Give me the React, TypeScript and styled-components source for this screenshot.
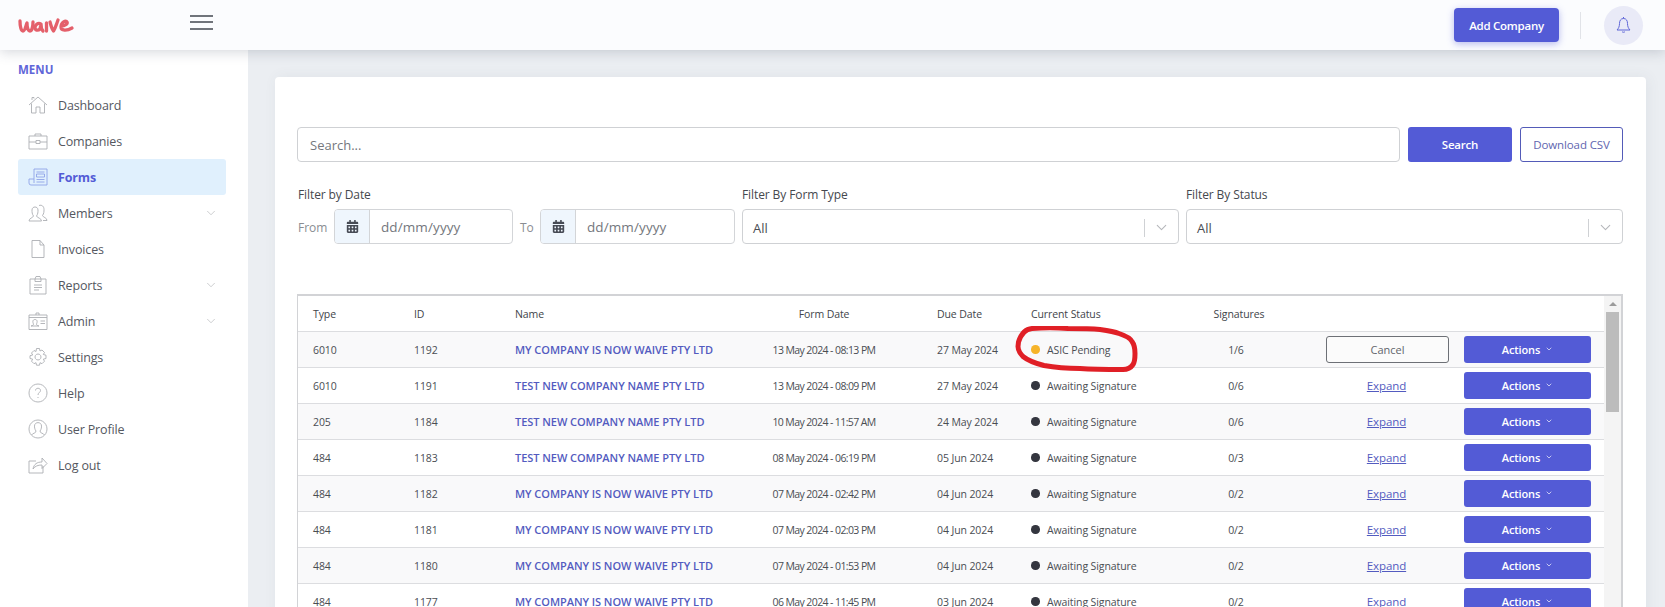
import { FC } from 'react';
import styled, { createGlobalStyle } from 'styled-components';
import { FaCalendarAlt } from 'react-icons/fa';
import { FiChevronDown } from 'react-icons/fi';

const GlobalStyle = createGlobalStyle`
  html, body {
    margin: 0;
    padding: 0;
    height: 607px;
    overflow: hidden;
    background: #ebeef2;
    font-family: 'Open Sans', 'Noto Sans', sans-serif;
    color: #3f4147;
  }
  * {
    box-sizing: border-box;
  }
`;

const Page = styled.div`
  width: 1665px;
  height: 607px;
  display: flex;
  flex-direction: column;
  overflow: hidden;
`;

const Header = styled.header`
  position: relative;
  z-index: 2;
  flex: 0 0 50px;
  display: flex;
  align-items: center;
  padding: 0 22px 0 18px;
  background: #fbfcfe;
  box-shadow: 0 2px 12px rgba(60, 70, 90, 0.22);
`;

const Burger = styled.div`
  width: 23px;
  margin-left: 115px;
  margin-top: -6px;
  display: flex;
  flex-direction: column;
  gap: 4.5px;
  span {
    height: 2px;
    background: #70747b;
  }
`;

const HeaderRight = styled.div`
  margin-left: auto;
  display: flex;
  align-items: center;
`;

const AddCompany = styled.button`
  width: 105px;
  height: 34px;
  border: 0;
  border-radius: 4px;
  background: #535bd6;
  color: #fff;
  font: 600 11.5px 'Open Sans', sans-serif;
  letter-spacing: -0.25px;
  box-shadow: 0 2px 7px rgba(83, 91, 214, 0.4);
`;

const HeaderDivider = styled.div`
  width: 1px;
  height: 27px;
  margin: 0 23px 0 21px;
  background: #e1e3e8;
`;

const Bell = styled.div`
  width: 39px;
  height: 39px;
  border-radius: 50%;
  background: #e9eaf7;
  display: flex;
  align-items: center;
  justify-content: center;
`;

const Body = styled.div`
  flex: 1;
  display: flex;
  min-height: 0;
`;

const Sidebar = styled.aside`
  flex: 0 0 248px;
  padding: 13px 22px 0 18px;
  background: #fff;
`;

const MenuTitle = styled.div`
  height: 24px;
  color: #5f66d8;
  font-size: 11.5px;
  line-height: 14px;
  font-weight: 700;
`;

const NavItem = styled.div<{ $active?: boolean }>`
  height: 36px;
  display: flex;
  align-items: center;
  padding: 0 8px 0 10px;
  border-radius: 3px;
  background: ${(p) => (p.$active ? '#e0f0fd' : 'transparent')};
  color: ${(p) => (p.$active ? '#535bd6' : '#55585f')};
  font-size: 12.5px;
  letter-spacing: -0.15px;
  font-weight: ${(p) => (p.$active ? 700 : 400)};
`;

const NavIcon = styled.svg`
  width: 20px;
  height: 20px;
  margin-right: 10px;
  flex: none;
  fill: none;
  stroke-width: 0.9;
`;

const NavLabel = styled.span`
  flex: 1;
`;

const Content = styled.main`
  flex: 1;
  min-width: 0;
  padding: 27px 0 0 27px;
`;

const Card = styled.section`
  width: 1371px;
  height: 560px;
  padding: 50px 23px 0 22px;
  border-radius: 4px 4px 0 0;
  background: #fff;
  box-shadow: 2px 0 14px rgba(70, 80, 100, 0.07);
`;

const SearchRow = styled.div`
  display: flex;
  height: 35px;
`;

const SearchInput = styled.div`
  flex: 1;
  display: flex;
  align-items: center;
  padding-left: 12px;
  border: 1px solid #cfd1d4;
  border-radius: 4px;
  color: #74777d;
  font-size: 13px;
`;

const SearchButton = styled.button`
  width: 104px;
  margin-left: 8px;
  border: 0;
  border-radius: 3px;
  background: #535bd6;
  color: #fff;
  font: 600 11.5px 'Open Sans', sans-serif;
  letter-spacing: -0.2px;
`;

const CsvButton = styled.button`
  width: 103px;
  margin-left: 8px;
  border: 1px solid #535bb8;
  border-radius: 3px;
  background: #fff;
  color: #5f66b0;
  font: 400 11.5px 'Open Sans', sans-serif;
  letter-spacing: -0.1px;
`;

const Filters = styled.div`
  display: flex;
  gap: 7px;
  margin: 23px 0 0 1px;
`;

const FilterGroup = styled.div<{ $width: number }>`
  width: ${(p) => p.$width}px;
`;

const FilterLabel = styled.div`
  height: 24px;
  color: #45484e;
  font-size: 12px;
  letter-spacing: -0.1px;
  line-height: 19px;
`;

const DateRow = styled.div`
  display: flex;
  align-items: center;
  height: 35px;
`;

const DateText = styled.span<{ $width: number; $pad?: number }>`
  width: ${(p) => p.$width}px;
  padding: 1px 0 0 ${(p) => p.$pad ?? 0}px;
  color: #8a8d92;
  font-size: 12px;
`;

const DateBox = styled.div<{ $width: number }>`
  width: ${(p) => p.$width}px;
  height: 35px;
  display: flex;
  border: 1px solid #d3d5d8;
  border-radius: 4px;
  overflow: hidden;
`;

const DateIcon = styled.div`
  width: 35px;
  display: flex;
  align-items: center;
  justify-content: center;
  background: #eff6fd;
  border-right: 1px solid #d3d5d8;
  color: #474b55;
  font-size: 13px;
`;

const DateValue = styled.div`
  flex: 1;
  padding-left: 11px;
  color: #74777d;
  font-size: 13.5px;
  letter-spacing: 0.1px;
  line-height: 35px;
`;

const SelectBox = styled.div`
  height: 35px;
  display: flex;
  align-items: center;
  padding: 2px 0 0 10px;
  border: 1px solid #cfd1d4;
  border-radius: 4px;
  color: #4a4d53;
  font-size: 13px;
`;

const SelectValue = styled.span`
  flex: 1;
`;

const SelectCaret = styled.div`
  width: 34px;
  height: 18px;
  display: flex;
  align-items: center;
  justify-content: center;
  border-left: 1px solid #cfd1d4;
  color: #b5b7bb;
  font-size: 17px;
`;

const TableWrap = styled.div`
  position: relative;
  margin-top: 50px;
  height: 400px;
  border-style: solid;
  border-color: #d2d3d6;
  border-width: 2px 2px 0 1px;
  overflow: hidden;
`;

const Table = styled.div`
  width: 1308px;
`;

const Row = styled.div<{ $head?: boolean; $shade?: boolean }>`
  display: grid;
  grid-template-columns: 101px 101px 209px 200px 13px 94px 149px 112px 172px 127px;
  align-items: center;
  height: 36px;
  padding-left: 15px;
  border-bottom: 1px solid #dcdde0;
  background: ${(p) => (p.$shade ? '#f9f9fa' : '#fff')};
  color: ${(p) => (p.$head ? '#41444a' : '#4a4d53')};
  font-size: 10.5px;
  letter-spacing: -0.1px;
`;

const Cell = styled.div<{ $center?: boolean }>`
  white-space: nowrap;
  text-align: ${(p) => (p.$center ? 'center' : 'left')};
`;

const FormDate = styled(Cell)`
  letter-spacing: -0.6px;
`;

const SignaturesHead = styled(Cell)`
  padding-left: 6px;
`;

const NameLink = styled.div`
  color: #535bc0;
  font-size: 11px;
  letter-spacing: -0.05px;
  font-weight: 600;
  white-space: nowrap;
`;

const Status = styled.div`
  display: flex;
  align-items: center;
  white-space: nowrap;
`;

const Dot = styled.span<{ $pending?: boolean }>`
  width: 8.5px;
  height: 8.5px;
  margin-right: 7.5px;
  border-radius: 50%;
  background: ${(p) => (p.$pending ? '#f6b42a' : '#34363f')};
`;

const CancelButton = styled.button`
  display: block;
  width: 123px;
  height: 27px;
  margin-left: 34px;
  border: 1px solid #6d7076;
  border-radius: 3px;
  background: #fbfbfb;
  color: #62656b;
  font: 400 11px 'Open Sans', sans-serif;
`;

const ExpandLink = styled.a`
  display: block;
  width: 121px;
  margin-left: 34px;
  color: #535bc0;
  font-size: 11.5px;
  text-align: center;
  text-decoration: underline;
`;

const ActionsButton = styled.button`
  width: 127px;
  height: 27px;
  border: 0;
  border-radius: 3px;
  background: #535bd6;
  color: #fff;
  font: 600 11px 'Open Sans', sans-serif;
  letter-spacing: -0.1px;
  svg {
    margin-left: 5px;
    vertical-align: 1px;
    font-size: 8px;
  }
`;

const Scrollbar = styled.div`
  position: absolute;
  top: 0;
  right: 0;
  bottom: 0;
  width: 17px;
  background: #f4f4f4;
`;

const ScrollUp = styled.div`
  height: 16px;
  display: flex;
  align-items: center;
  justify-content: center;
  &::before {
    content: '';
    border-left: 4px solid transparent;
    border-right: 4px solid transparent;
    border-bottom: 4px solid #9b9b9b;
  }
`;

const ScrollThumb = styled.div`
  height: 100px;
  margin: 0 2px;
  background: #bcbcbc;
`;

const RedRing = styled.svg`
  position: absolute;
  left: 717px;
  top: 30px;
  width: 124px;
  height: 46px;
`;

const navItems = [
  {
    label: 'Dashboard',
    paths: ['M1 10 10 2l9 8', 'M3.5 8.5V18h4.500v-6h4v6h4.500V8.500', 'M4 5V2.500h2V3.500'],
  },
  {
    label: 'Companies',
    paths: ['M1 5h18v13H1z', 'M7 5V3h6v2', 'M1 11h7M12 11h7', 'M8 9.500h4v3H8z'],
  },
  {
    label: 'Forms',
    active: true,
    paths: ['M6 16V2h13v16H3a2 2 0 0 1-2-2v-4h5', 'M8.500 5h8M8.500 7h8v3h-8zM8.500 12.500h8M8.500 15h8'],
  },
  {
    label: 'Members',
    chevron: true,
    paths: [
      'M1 18c0-3 4-3 4.500-5C4 11 4 9 4 7c0-4 6-4 6 0 0 2 0 4-1.500 6 .5 2 5 2 5 5z',
      'M11 2.500c3-1 5 1 5 4 0 2 0 4-1.500 6 .5 2 4.500 2 4.500 5h-4',
    ],
  },
  { label: 'Invoices', paths: ['M4 1.500h8l4 4.500v12.500H4z', 'M12 1.500V6h4'] },
  {
    label: 'Reports',
    chevron: true,
    paths: ['M2 4h5l1-2.500h4L13 4h5v15H2z', 'M7 4h6v2.500H7z', 'M6 10h8M6 12.500h8M6 15h5'],
  },
  {
    label: 'Admin',
    chevron: true,
    paths: ['M1 4h18v14.500H1z', 'M1 6.500h18', 'M8 4V2h3v2', 'M3 15c2-.5 2.500-1 2.500-2C4.500 11 4.500 8.500 7 8.500s2.500 2.500 1.500 4.500c0 1 .5 1.500 2.500 2z', 'M12.500 10H17M12.500 12.500H17'],
  },
  {
    label: 'Settings',
    paths: [
      'M8.500 1.500h3l.5 2.500 2-1 2.500 2.500-1.200 2 2.700.7v3.300l-2.700.7 1.200 2-2.500 2.500-2-1-.5 2.500h-3l-.5-2.500-2 1-2.500-2.500 1.200-2-2.700-.7V8.700l2.700-.7-1.200-2L6 3.500l2 1z',
      'M10 7a3 3 0 1 0 .01 0z',
    ],
  },
  {
    label: 'Help',
    paths: ['M10 1a9 9 0 1 0 .01 0z', 'M7.500 7.500C7.500 4.500 12.500 4.500 12.500 7.500 12.500 9.500 10 9.500 10 12', 'M10 14v1'],
  },
  {
    label: 'User Profile',
    paths: ['M10 1a9 9 0 1 0 .01 0z', 'M3.500 16c1-2 4.500-1.500 4.500-4C6.500 10 6.500 8 6.500 7c0-4.500 7-4.500 7 0 0 1 0 3-1.500 5 0 2.500 3.500 2 4.500 4'],
  },
  {
    label: 'Log out',
    paths: ['M15 11v7H1V6h7', 'M5 14c1-5 4-7 9-7V3l5 5.500-5 5V10c-4 0-7 1-9 4z'],
  },
];

const rows = [
  { type: '6010', id: '1192', name: 'MY COMPANY IS NOW WAIVE PTY LTD', form: '13 May 2024 - 08:13 PM', due: '27 May 2024', sig: '1/6', pending: true },
  { type: '6010', id: '1191', name: 'TEST NEW COMPANY NAME PTY LTD', form: '13 May 2024 - 08:09 PM', due: '27 May 2024', sig: '0/6' },
  { type: '205', id: '1184', name: 'TEST NEW COMPANY NAME PTY LTD', form: '10 May 2024 - 11:57 AM', due: '24 May 2024', sig: '0/6' },
  { type: '484', id: '1183', name: 'TEST NEW COMPANY NAME PTY LTD', form: '08 May 2024 - 06:19 PM', due: '05 Jun 2024', sig: '0/3' },
  { type: '484', id: '1182', name: 'MY COMPANY IS NOW WAIVE PTY LTD', form: '07 May 2024 - 02:42 PM', due: '04 Jun 2024', sig: '0/2' },
  { type: '484', id: '1181', name: 'MY COMPANY IS NOW WAIVE PTY LTD', form: '07 May 2024 - 02:03 PM', due: '04 Jun 2024', sig: '0/2' },
  { type: '484', id: '1180', name: 'MY COMPANY IS NOW WAIVE PTY LTD', form: '07 May 2024 - 01:53 PM', due: '04 Jun 2024', sig: '0/2' },
  { type: '484', id: '1177', name: 'MY COMPANY IS NOW WAIVE PTY LTD', form: '06 May 2024 - 11:45 PM', due: '03 Jun 2024', sig: '0/2' },
];

const App: FC = () => {
  return (
    <Page>
      <GlobalStyle />
      <Header>
        {/* wordmark is a brush drawing, traced as strokes */}
        <svg width="57" height="18" viewBox="0 0 57 18" fill="none" stroke="#e4606b" strokeWidth="3.300" strokeLinecap="round" strokeLinejoin="round">
          <path d="M2 5c0 5 1 10 3 10s3-6 4-8c0 4 1 8 3 8 2 0 3-5 3-9" />
          <path d="M23 8c-3-2-6 1-6 3.500 0 3 3 3.500 5 1.500l1-5c0 3 0 5 2 7" />
          <path d="M28.500 7v8" />
          <path d="M32 6c1 4 2 7 3.500 9 2-3 3-7 4.500-11" />
          <path d="M43 10c4 0 7-2 6-4-1-2-6 0-6 5 0 4 6 4 11 1" />
        </svg>
        <Burger>
          <span />
          <span />
          <span />
        </Burger>
        <HeaderRight>
          <AddCompany>Add Company</AddCompany>
          <HeaderDivider />
          <Bell>
            <svg width="15" height="18" viewBox="0 0 15 18" fill="none" stroke="#5f66d8" strokeWidth="1">
              <path d="M7.500 1v1.500C4.500 2.500 3.500 5 3.500 7.500c0 3-1 5-2.500 6.500h13c-1.500-1.500-2.500-3.500-2.500-6.500 0-2.500-1-5-4-5" />
              <path d="M6 15.500c.5 1 2.500 1 3 0" />
            </svg>
          </Bell>
        </HeaderRight>
      </Header>
      <Body>
        <Sidebar>
          <MenuTitle>MENU</MenuTitle>
          {navItems.map((item) => (
            <NavItem key={item.label} $active={item.active}>
              <NavIcon viewBox="0 0 20 20" stroke={item.active ? '#8fa3e8' : '#adafb3'}>
                {item.paths.map((d) => (
                  <path key={d} d={d} />
                ))}
              </NavIcon>
              <NavLabel>{item.label}</NavLabel>
              {item.chevron && <FiChevronDown size={14} color="#a8aaae" strokeWidth={1} />}
            </NavItem>
          ))}
        </Sidebar>
        <Content>
          <Card>
            <SearchRow>
              <SearchInput>Search...</SearchInput>
              <SearchButton>Search</SearchButton>
              <CsvButton>Download CSV</CsvButton>
            </SearchRow>
            <Filters>
              <FilterGroup $width={437}>
                <FilterLabel>Filter by Date</FilterLabel>
                <DateRow>
                  <DateText $width={36}>From</DateText>
                  <DateBox $width={179}>
                    <DateIcon>
                      <FaCalendarAlt />
                    </DateIcon>
                    <DateValue>dd/mm/yyyy</DateValue>
                  </DateBox>
                  <DateText $width={27} $pad={7}>
                    To
                  </DateText>
                  <DateBox $width={195}>
                    <DateIcon>
                      <FaCalendarAlt />
                    </DateIcon>
                    <DateValue>dd/mm/yyyy</DateValue>
                  </DateBox>
                </DateRow>
              </FilterGroup>
              <FilterGroup $width={437}>
                <FilterLabel>Filter By Form Type</FilterLabel>
                <SelectBox>
                  <SelectValue>All</SelectValue>
                  <SelectCaret>
                    <FiChevronDown strokeWidth={1.500} />
                  </SelectCaret>
                </SelectBox>
              </FilterGroup>
              <FilterGroup $width={437}>
                <FilterLabel>Filter By Status</FilterLabel>
                <SelectBox>
                  <SelectValue>All</SelectValue>
                  <SelectCaret>
                    <FiChevronDown strokeWidth={1.500} />
                  </SelectCaret>
                </SelectBox>
              </FilterGroup>
            </Filters>
            <TableWrap>
              <Table>
                <Row $head>
                  <Cell>Type</Cell>
                  <Cell>ID</Cell>
                  <Cell>Name</Cell>
                  <Cell $center>Form Date</Cell>
                  <Cell />
                  <Cell>Due Date</Cell>
                  <Cell>Current Status</Cell>
                  <SignaturesHead $center>Signatures</SignaturesHead>
                  <Cell />
                  <Cell />
                </Row>
                {rows.map((row, i) => (
                  <Row key={row.id} $shade={i % 2 === 0}>
                    <Cell>{row.type}</Cell>
                    <Cell>{row.id}</Cell>
                    <NameLink>{row.name}</NameLink>
                    <FormDate $center>{row.form}</FormDate>
                    <Cell />
                    <Cell>{row.due}</Cell>
                    <Status>
                      <Dot $pending={row.pending} />
                      {row.pending ? 'ASIC Pending' : 'Awaiting Signature'}
                    </Status>
                    <Cell $center>{row.sig}</Cell>
                    <Cell>
                      {row.pending ? <CancelButton>Cancel</CancelButton> : <ExpandLink>Expand</ExpandLink>}
                    </Cell>
                    <Cell>
                      <ActionsButton>
                        Actions
                        <FiChevronDown />
                      </ActionsButton>
                    </Cell>
                  </Row>
                ))}
              </Table>
              <Scrollbar>
                <ScrollUp />
                <ScrollThumb />
              </Scrollbar>
              {/* hand-drawn marker ring around the first status */}
              <RedRing viewBox="0 0 124 46" fill="none" stroke="#e01f26" strokeWidth="5" strokeLinecap="round" strokeLinejoin="round">
                <path d="M3.500 16C6 8 11 3 17 2.500c12-1 24-1 36 0 11 0 22 0 32 1 7 1 14 2 19 4 6 2 11 4 13 8 3 4 3 8 3 12 0 4 0 8-2 11-2 3-5 5-10 5-14 0-29 0-43-1-12 0-25-1-36-3-8-2-16-5-21-9-3-3-5-6-5-10z" />
              </RedRing>
            </TableWrap>
          </Card>
        </Content>
      </Body>
    </Page>
  );
};

export default App;
